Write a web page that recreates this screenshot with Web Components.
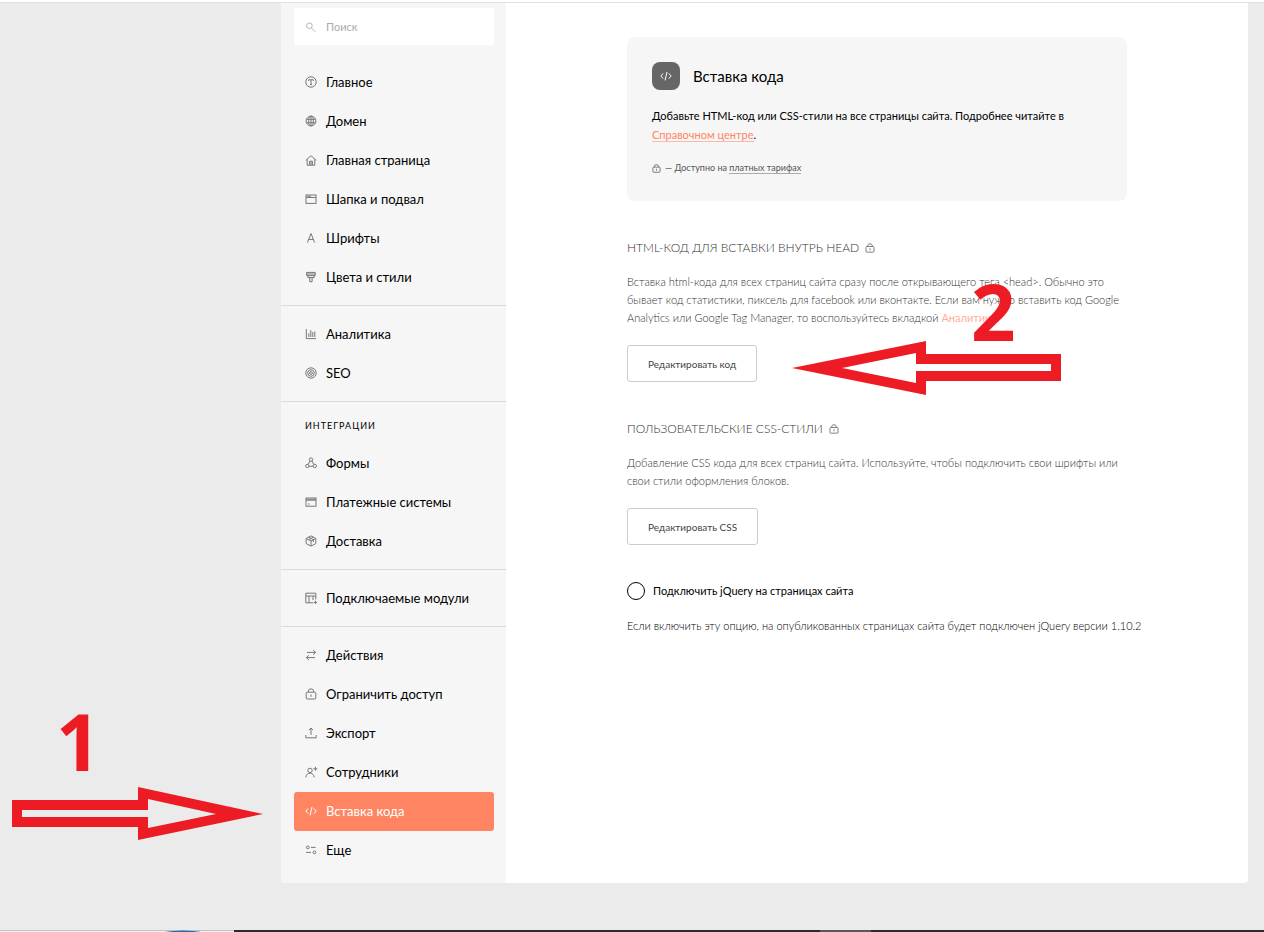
<!DOCTYPE html>
<html lang="ru">
<head>
<meta charset="utf-8">
<title>Вставка кода</title>
<style>
  html, body { margin: 0; }
  body {
    min-height: 100vh;
    background: #ebebeb;
    color: #000;
    font-family: Lato, "Open Sans", sans-serif;
    font-size: 13px;
  }
</style>
</head>
<body>

<settings-page>
  <side-nav slot="nav">
    <nav-item icon="main">Главное</nav-item>
    <nav-item icon="globe">Домен</nav-item>
    <nav-item icon="home">Главная страница</nav-item>
    <nav-item icon="window">Шапка и подвал</nav-item>
    <nav-item icon="letter">Шрифты</nav-item>
    <nav-item icon="brush">Цвета и стили</nav-item>
    <nav-rule></nav-rule>
    <nav-item icon="chart">Аналитика</nav-item>
    <nav-item icon="target">SEO</nav-item>
    <nav-rule></nav-rule>
    <nav-heading>Интеграции</nav-heading>
    <nav-item icon="nodes">Формы</nav-item>
    <nav-item icon="card">Платежные системы</nav-item>
    <nav-item icon="box">Доставка</nav-item>
    <nav-rule></nav-rule>
    <nav-item icon="module">Подключаемые модули</nav-item>
    <nav-rule></nav-rule>
    <nav-item icon="swap">Действия</nav-item>
    <nav-item icon="lock">Ограничить доступ</nav-item>
    <nav-item icon="export">Экспорт</nav-item>
    <nav-item icon="people">Сотрудники</nav-item>
    <nav-item icon="code" active>Вставка кода</nav-item>
    <nav-item icon="more">Еще</nav-item>
  </side-nav>

  <intro-card></intro-card>

  <code-section heading="HTML-код для вставки внутрь head" action="Редактировать код">
    Вставка html-кода для всех страниц сайта сразу после открывающего тега &lt;head&gt;. Обычно это<br>
    бывает код статистики, пиксель для facebook или вконтакте. Если вам нужно вставить код Google<br>
    Analytics или Google Tag Manager, то воспользуйтесь вкладкой <text-link tone="soft">Аналитика</text-link>.
  </code-section>

  <code-section heading="Пользовательские CSS-стили" action="Редактировать CSS">
    Добавление CSS кода для всех страниц сайта. Используйте, чтобы подключить свои шрифты или<br>
    свои стили оформления блоков.
  </code-section>

  <jquery-option></jquery-option>
</settings-page>

<step-mark number="1" direction="right"></step-mark>
<step-mark number="2" direction="left"></step-mark>

<script>
/* Icon set, all drawn on a 12x12 grid */
const ICONS = {
  main: '<circle cx="6" cy="6" r="5.2"/><path d="M3.6 4.8V3.8h4.8v1M6 3.8v4.8M5 8.6h2"/>',
  globe: '<circle cx="6" cy="6" r="4.9"/><ellipse cx="6" cy="6" rx="2.3" ry="4.9"/><path d="M1.6 4.3h8.8M1.6 7.7h8.8M6 1.2v9.6"/>',
  home: '<path d="M.8 6.4 6 1.7l5.2 4.7M2.2 5.4v5.8h7.6V5.4M4.6 11V7.2h2.8V11M6 7.2V11"/>',
  window: '<rect x="1" y="2" width="10" height="8.4"/><path d="M1 4.5h10M2 3.2h4"/>',
  letter: '<path d="M2.4 10.5 6 1.5l3.6 9M3.8 7.4h4.4"/>',
  brush: '<path d="M1.6 1.4h8.6v3.2H1.6zM1.6 3h8.6M2.8 4.6v1.9h6.4V4.6M4.8 6.5v4.3h2.3V6.5"/>',
  chart: '<path d="M1.3 1v9.6H11M3.8 9V5.2M5.8 9V2.2M7.8 9V4M9.8 9V3.4"/>',
  target: '<circle cx="6" cy="6" r="5.2"/><circle cx="6" cy="6" r="3.3"/><circle cx="6" cy="6" r="1.4"/>',
  nodes: '<circle cx="6" cy="2.6" r="1.7"/><circle cx="2.3" cy="9" r="1.7"/><circle cx="9.7" cy="9" r="1.7"/><path d="M5.1 4 3.1 7.5M6.9 4l2 3.5M4 9.3h4"/>',
  card: '<rect x="1" y="2" width="10" height="8.2"/><path d="M1 3.2h10M1 4.2h10M3 8h1.6"/>',
  box: '<path d="M6 .9 10.8 3.4v5.2L6 11.1 1.2 8.6V3.4zM1.2 3.4 6 6l4.8-2.6M6 6v5M3.6 2.2l4.8 2.5v2.4M8.4 2.2 3.6 4.7"/>',
  module: '<path d="M10.8 7.4V1.2H.8v9.6h7.4M.8 4h10M4 4v6.8M8 8V4M8.8 10.4h3.2M10.4 8.8V12"/>',
  swap: '<path d="M2 3.4h8.6M8.2 1.2l2.4 2.2-2.4 2.2M10 8.6H1.4M3.8 6.4 1.4 8.6l2.4 2.4"/>',
  lock: '<rect x="1.2" y="4.2" width="9.6" height="6.8" rx="1"/><path d="M3.3 4.2V3a2.7 2.1 0 0 1 5.4 0v1.2M6 6.4v2.4"/>',
  export: '<path d="M.8 8v2.8h10.4V8M6 8V1M3.8 3.2 6 1l2.2 2.2"/>',
  people: '<circle cx="5" cy="4.4" r="2.2"/><path d="M.8 11.4C1.2 8.6 2.6 7.2 5 7.2s3.8 1.4 4.2 4.2M10.4.8v4M8.4 2.8h4"/>',
  code: '<path d="M3.2 3.4.8 6l2.4 2.6M8.8 3.4 11.2 6 8.8 8.6M7 2 5 10.4"/>',
  more: '<circle cx="2.8" cy="3.4" r="1.4"/><circle cx="9.4" cy="8.4" r="1.4"/><path d="M6 3.4h4.6M1.2 8.4h4.8"/>',
  search: '<circle cx="4.4" cy="4.8" r="2.8"/><path d="m6.6 7 3.8 3.8"/>'
};

function define(name, template) {
  customElements.define(name, class extends HTMLElement {
    constructor() {
      super();
      this.attachShadow({ mode: 'open' });
    }
    connectedCallback() {
      const html = typeof template === 'function' ? template(this) : template;
      this.shadowRoot.innerHTML = html.trim();
    }
  });
}

/* ── <ui-icon name size> ── */
define('ui-icon', el => {
  const size = el.getAttribute('size') || 12;
  return `
    <style>
      :host { display: inline-block; flex: none; line-height: 0; }
      svg { overflow: visible; fill: none; stroke: currentColor; stroke-width: 1; }
    </style>
    <svg width="${size}" height="${size}" viewBox="0 0 12 12" aria-hidden="true">${ICONS[el.getAttribute('name')]}</svg>
  `;
});

/* ── <text-link tone> ── */
define('text-link', `
  <style>
    :host { display: inline; }
    a { color: #ff8562; text-decoration: none; border-bottom: 1px solid #ffb8a3; }
    :host([tone="soft"]) a { color: #ffae98; border: 0; font-weight: 400; }
    :host([tone="grey"]) a { color: inherit; border-color: #aaa; }
  </style><a href="#"><slot></slot></a>
`);

/* ── Page frame ── */
define('settings-page', `
  <style>
    :host { display: flex; flex-direction: column; min-height: 100vh; }
    .top { height: 2px; background: #fff; border-bottom: 1px solid #e1e1e1; }
    .frame {
      display: grid;
      grid-template-columns: 225px 1fr;
      margin: 0 16px 0 281px;
      background: #fff;
      border-radius: 0 0 4px 4px;
      overflow: hidden;
    }
    main { display: flex; justify-content: center; padding: 34px 24px; }
    .content { flex: 0 1 500px; min-width: 0; }
    task-strip { margin-top: auto; }
  </style>
  <div class="top"></div>
  <div class="frame">
    <slot name="nav"></slot>
    <main><div class="content"><slot></slot></div></main>
  </div>
  <task-strip></task-strip>
`);

define('task-strip', `
  <style>
    :host { display: block; }
    svg { display: block; width: 100%; height: 2px; }
  </style>
  <svg aria-hidden="true">
    <rect width="100%" height="2" fill="#2e2b2d"/>
    <rect x="820" width="51" height="2" fill="#5a5759"/>
    <rect width="234" height="1" fill="#c2c2c2"/>
    <rect y="1" width="234" height="1" fill="#f2f2f2"/>
    <ellipse cx="183" cy="5" rx="26" ry="4.4" fill="#2f67a0"/>
  </svg>
`);

/* ── Sidebar ── */
define('side-nav', `
  <style>
    :host { display: block; background: #f6f6f6; padding: 5px 0 13px; }
    label {
      display: flex;
      align-items: center;
      gap: 9px;
      height: 37px;
      margin: 0 12px 18px 13px;
      padding: 0 11px;
      border-radius: 3px;
      background: #fff;
      color: #b5b5b5;
    }
    input {
      flex: 1;
      min-width: 0;
      border: 0;
      padding: 0 0 1px;
      outline: 0;
      background: none;
      font: 11px Lato, sans-serif;
    }
    input::placeholder { color: #aaa; opacity: 1; }
  </style>
  <label><ui-icon name="search"></ui-icon><input type="search" placeholder="Поиск" aria-label="Поиск"></label>
  <nav><slot></slot></nav>
`);

define('nav-item', el => `
  <style>
    :host { display: block; margin: 0 12px 0 13px; }
    a {
      display: flex;
      align-items: center;
      gap: 9px;
      box-sizing: border-box;
      height: 39px;
      padding: 0 11px 2px;
      border-radius: 3px;
      color: #000;
      text-decoration: none;
      white-space: nowrap;
    }
    ui-icon { color: #777; }
    :host([active]) a { background: #ff8562; color: #fff; }
    :host([active]) ui-icon { color: #fff; }
  </style>
  <a href="#"><ui-icon name="${el.getAttribute('icon')}"></ui-icon><span><slot></slot></span></a>
`);

define('nav-rule', `
  <style>
    :host { display: block; height: 1px; margin: 8px 0 9px; background: #dadada; }
  </style>
`);

define('nav-heading', `
  <style>
    :host {
      display: block;
      padding: 3px 24px 6px;
      font-size: 9px;
      line-height: 24px;
      letter-spacing: 1px;
      text-transform: uppercase;
    }
  </style>
  <slot></slot>
`);

/* ── Intro card ── */
define('intro-card', `
  <style>
    :host { display: block; padding: 25px; border-radius: 8px; background: #f6f6f6; }
    header { display: flex; align-items: center; gap: 13px; }
    .badge {
      display: grid;
      place-items: center;
      width: 28px;
      height: 28px;
      border-radius: 8px;
      background: #666;
      color: #fff;
    }
    h1 { margin: 0; font-size: 15px; font-weight: 400; line-height: 28px; }
    p { margin: 16px 0 0; font-size: 11px; line-height: 19px; white-space: nowrap; }
    .note {
      display: flex;
      align-items: center;
      gap: 4px;
      color: #555;
      font-size: 9px;
      line-height: 16px;
    }
  </style>
  <header>
    <span class="badge"><ui-icon name="code"></ui-icon></span>
    <h1>Вставка кода</h1>
  </header>
  <p>Добавьте HTML-код или CSS-стили на все страницы сайта. Подробнее читайте в<br><text-link>Справочном центре</text-link>.</p>
  <p class="note"><ui-icon name="lock" size="9"></ui-icon><span>— Доступно на <text-link tone="grey">платных тарифах</text-link></span></p>
`);

/* ── <code-section heading action> ── */
define('code-section', el => `
  <style>
    :host { display: block; margin-top: 37px; color: #333; }
    h2 {
      display: flex;
      align-items: center;
      gap: 6px;
      margin: 0 0 16px;
      font-size: 12px;
      font-weight: 300;
      line-height: 19px;
      text-transform: uppercase;
      white-space: nowrap;
    }
    ui-icon { color: #666; }
    p { margin: 0 0 17px; font-size: 11px; font-weight: 300; line-height: 18px; white-space: nowrap; }
    p + button { margin-top: 18px; }
    button {
      display: block;
      height: 37px;
      padding: 0 20px;
      border: 1px solid #ccc;
      border-radius: 3px;
      background: #fff;
      color: #444;
      font: 10px Lato, sans-serif;
    }
  </style>
  <h2>${el.getAttribute('heading')}<ui-icon name="lock" size="10"></ui-icon></h2>
  <p><slot></slot></p>
  <button type="button">${el.getAttribute('action')}</button>
`);

/* ── jQuery switch ── */
define('jquery-option', `
  <style>
    :host { display: block; margin-top: 36px; font-size: 11px; }
    label { display: flex; align-items: center; gap: 8px; line-height: 20px; }
    input {
      appearance: none;
      width: 18px;
      height: 18px;
      margin: 0;
      border: 1px solid #000;
      border-radius: 50%;
    }
    input:checked { background: #000; }
    p { margin: 15px 0 0; line-height: 19px; font-weight: 300; white-space: nowrap; }
  </style>
  <label><input type="checkbox">Подключить jQuery на страницах сайта</label>
  <p>Если включить эту опцию, на опубликованных страницах сайта будет подключен jQuery версии 1.10.2</p>
`);

/* ── <step-mark number direction>: numbered arrow laid over the page ── */
const ARROWS = {
  right: { width: 251, d: 'M0 14h126V1l125 27-125 26V41H0zM10 24v7h126v11l68-14-68-15v11z' },
  left:  { width: 269, d: 'M269 13H134V0L0 27l134 27V40h135zM259 23v7H124v12L50 27l74-15v11z' }
};

define('step-mark', el => {
  const arrow = ARROWS[el.getAttribute('direction')];
  return `
    <style>
      :host { position: absolute; color: #ed1c24; pointer-events: none; }
      :host([number="1"]) { left: 12px; top: 701px; }
      :host([number="2"]) { left: 792px; top: 271px; }
      span { display: block; font: bold 78px/80px "Open Sans", sans-serif; }
      :host([number="1"]) span { padding-left: 44px; }
      :host([number="2"]) span { padding-left: 179px; }
      svg { display: block; margin-top: 5px; }
      :host([number="2"]) svg { margin-top: -10px; }
    </style>
    <span>${el.getAttribute('number')}</span>
    <svg width="${arrow.width}" height="54" aria-hidden="true"><path fill="currentColor" fill-rule="evenodd" d="${arrow.d}"/></svg>
  `;
});
</script>
</body>
</html>
